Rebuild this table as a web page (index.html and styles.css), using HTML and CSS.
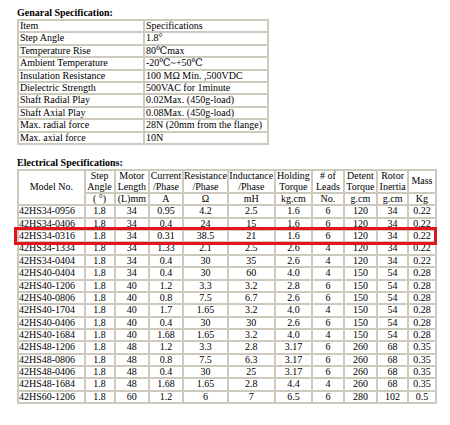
FILE: index.html
```html
<!DOCTYPE html>
<html>
<head>
<meta charset="utf-8">
<link rel="stylesheet" href="styles.css">
</head>
<body>
<div class="page">
  <h2 class="title">Genaral Specification:</h2>
  <table class="spec gen">
    <colgroup><col class="g1"><col class="g2"></colgroup>
    <tr><td>Item</td><td>Specifications</td></tr>
    <tr><td>Step Angle</td><td>1.8°</td></tr>
    <tr><td>Temperature Rise</td><td>80℃max</td></tr>
    <tr><td>Ambient Temperature</td><td>-20℃~+50℃</td></tr>
    <tr><td>Insulation Resistance</td><td>100 MΩ Min. ,500VDC</td></tr>
    <tr><td>Dielectric Strength</td><td>500VAC for 1minute</td></tr>
    <tr><td>Shaft Radial Play</td><td>0.02Max. (450g-load)</td></tr>
    <tr><td>Shaft Axial Play</td><td>0.08Max. (450g-load)</td></tr>
    <tr><td>Max. radial force</td><td>28N (20mm from the flange)</td></tr>
    <tr><td>Max. axial force</td><td>10N</td></tr>
  </table>

  <h2 class="title title2">Electrical Specifications:</h2>
  <div class="elec-wrap">
    <table class="spec elec">
      <colgroup>
        <col class="c1"><col class="c2"><col class="c3"><col class="c4"><col class="c5"><col class="c6">
        <col class="c7"><col class="c8"><col class="c9"><col class="c10"><col class="c11">
      </colgroup>
      <tr class="h1">
        <th rowspan="2">Model No.</th>
        <th>Step<br>Angle</th><th>Motor<br>Length</th><th>Current<br>/Phase</th><th>Resistance<br>/Phase</th>
        <th>Inductance<br>/Phase</th><th>Holding<br>Torque</th><th># of<br>Leads</th><th>Detent<br>Torque</th>
        <th>Rotor<br>Inertia</th><th>Mass</th>
      </tr>
      <tr class="h2">
        <th>( °)</th><th>(L)mm</th><th>A</th><th>Ω</th><th>mH</th><th>kg.cm</th><th>No.</th><th>g.cm</th><th>g.cm</th><th>Kg</th>
      </tr>
      <tr><td>42HS34-0956</td><td>1.8</td><td>34</td><td>0.95</td><td>4.2</td><td>2.5</td><td>1.6</td><td>6</td><td>120</td><td>34</td><td>0.22</td></tr>
      <tr><td>42HS34-0406</td><td>1.8</td><td>34</td><td>0.4</td><td>24</td><td>15</td><td>1.6</td><td>6</td><td>120</td><td>34</td><td>0.22</td></tr>
      <tr><td>42HS34-0316</td><td>1.8</td><td>34</td><td>0.31</td><td>38.5</td><td>21</td><td>1.6</td><td>6</td><td>120</td><td>34</td><td>0.22</td></tr>
      <tr><td>42HS34-1334</td><td>1.8</td><td>34</td><td>1.33</td><td>2.1</td><td>2.5</td><td>2.6</td><td>4</td><td>120</td><td>34</td><td>0.22</td></tr>
      <tr><td>42HS34-0404</td><td>1.8</td><td>34</td><td>0.4</td><td>30</td><td>35</td><td>2.6</td><td>4</td><td>120</td><td>34</td><td>0.22</td></tr>
      <tr><td>42HS40-0404</td><td>1.8</td><td>34</td><td>0.4</td><td>30</td><td>60</td><td>4.0</td><td>4</td><td>150</td><td>54</td><td>0.28</td></tr>
      <tr><td>42HS40-1206</td><td>1.8</td><td>40</td><td>1.2</td><td>3.3</td><td>3.2</td><td>2.8</td><td>6</td><td>150</td><td>54</td><td>0.28</td></tr>
      <tr><td>42HS40-0806</td><td>1.8</td><td>40</td><td>0.8</td><td>7.5</td><td>6.7</td><td>2.6</td><td>6</td><td>150</td><td>54</td><td>0.28</td></tr>
      <tr><td>42HS40-1704</td><td>1.8</td><td>40</td><td>1.7</td><td>1.65</td><td>3.2</td><td>4.0</td><td>4</td><td>150</td><td>54</td><td>0.28</td></tr>
      <tr><td>42HS40-0406</td><td>1.8</td><td>40</td><td>0.4</td><td>30</td><td>30</td><td>2.6</td><td>6</td><td>150</td><td>54</td><td>0.28</td></tr>
      <tr><td>42HS40-1684</td><td>1.8</td><td>40</td><td>1.68</td><td>1.65</td><td>3.2</td><td>4.0</td><td>4</td><td>150</td><td>54</td><td>0.28</td></tr>
      <tr><td>42HS48-1206</td><td>1.8</td><td>48</td><td>1.2</td><td>3.3</td><td>2.8</td><td>3.17</td><td>6</td><td>260</td><td>68</td><td>0.35</td></tr>
      <tr><td>42HS48-0806</td><td>1.8</td><td>48</td><td>0.8</td><td>7.5</td><td>6.3</td><td>3.17</td><td>6</td><td>260</td><td>68</td><td>0.35</td></tr>
      <tr><td>42HS48-0406</td><td>1.8</td><td>48</td><td>0.4</td><td>30</td><td>25</td><td>3.17</td><td>6</td><td>260</td><td>68</td><td>0.35</td></tr>
      <tr><td>42HS48-1684</td><td>1.8</td><td>48</td><td>1.68</td><td>1.65</td><td>2.8</td><td>4.4</td><td>4</td><td>260</td><td>68</td><td>0.35</td></tr>
      <tr><td>42HS60-1206</td><td>1.8</td><td>60</td><td>1.2</td><td>6</td><td>7</td><td>6.5</td><td>6</td><td>280</td><td>102</td><td>0.5</td></tr>
    </table>
    <div class="highlight"></div>
  </div>
</div>
</body>
</html>
```

FILE: styles.css
```css
html, body {
  margin: 0;
  padding: 0;
  background: #ffffff;
}

.page {
  padding: 7px 0 0 17px;
  font-family: "Liberation Serif", "Times New Roman", "DejaVu Serif", serif;
  font-size: 10px;
  color: #000;
}

.title {
  margin: 0 0 1px 0;
  font-size: 10px;
  line-height: 11px;
  font-weight: bold;
}

.title2 {
  margin-top: 12px;
}

.spec {
  border-collapse: separate;
  border-spacing: 0;
  border: 1px solid #cdc9bd;
  table-layout: fixed;
}

.spec td, .spec th {
  border: 1px solid #cdc9bd;
  padding: 0;
  white-space: nowrap;
  overflow: hidden;
}

.gen {
  width: 250px;
}
.gen td {
  line-height: 10.4px;
  padding-left: 1px;
  text-align: left;
}
.g1 { width: 126px; }
.g2 { width: 124px; }

.elec-wrap {
  position: relative;
  width: 418px;
}

.elec {
  width: 418px;
}
.elec th {
  font-weight: normal;
  text-align: center;
  vertical-align: middle;
  line-height: 10.6px;
}
.elec .h2 th {
  line-height: 10.2px;
}
.elec td {
  text-align: center;
  line-height: 10.35px;
}
.elec td:first-child {
  text-align: left;
  padding-left: 0;
}

.c1 { width: 66.6px; }
.c2 { width: 30px; }
.c3 { width: 34.4px; }
.c4 { width: 34px; }
.c5 { width: 45px; }
.c6 { width: 46.6px; }
.c7 { width: 37.7px; }
.c8 { width: 31.3px; }
.c9 { width: 33.7px; }
.c10 { width: 30.7px; }
.c11 { width: 28px; }

.highlight {
  position: absolute;
  left: -3px;
  top: 58px;
  width: 423px;
  height: 18px;
  box-sizing: border-box;
  border: 3px solid #e3141c;
}
```
